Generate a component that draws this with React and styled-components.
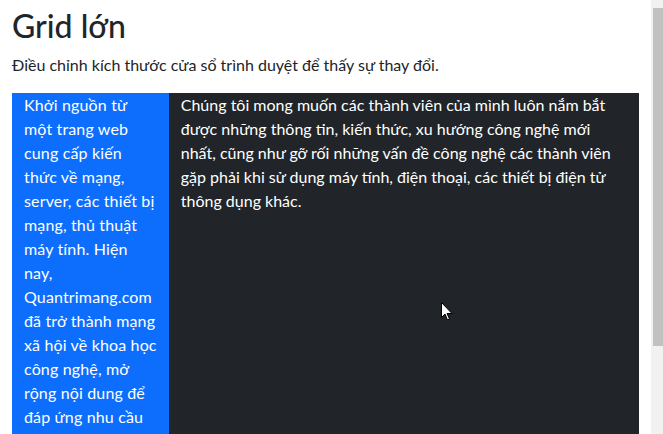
import React from 'react'
import styled, { createGlobalStyle } from 'styled-components'

const GlobalStyle = createGlobalStyle`
   html, body {
      margin: 0;
      height: 100%;
      overflow: hidden;
   }
   body {
      font-family: Lato, "Noto Sans", sans-serif;
      font-size: 16px;
      line-height: 1.5;
      color: #212529;
      background: #fff;
   }
   #root {
      height: 100%;
   }
`

const Window = styled.div`
   display: flex;
   height: 100%;
   position: relative;
`

const Page = styled.div`
   flex: 1;
   min-width: 0;
   padding: 7px 12px 0;
`

const Title = styled.h1`
   margin: 0 0 8px;
   font-size: 32px;
   font-weight: 500;
   line-height: 1.2;
`

const Lead = styled.p`
   margin: 0 0 16px;
`

const Row = styled.div`
   display: flex;
   align-items: stretch;
`

const Col = styled.div`
   flex: 0 0 ${p => p.$span / 12 * 100}%;
   box-sizing: border-box;
   padding: 0 12px;
   color: #fff;
   background: ${p => p.$bg};
   letter-spacing: ${p => p.$tracking || 0}px;
`

const Scrollbar = styled.div`
   flex: 0 0 12px;
   background: #f1f1f1;
   display: flex;
   flex-direction: column;
   align-items: flex-end;
`

const Thumb = styled.div`
   width: 10px;
   height: 338px;
   margin-top: 8px;
   background: #c1c1c1;
`

const Cursor = styled.svg`
   position: absolute;
   left: 441px;
   top: 302px;
   pointer-events: none;
`

function App() {
   return (
      <Window>
         <GlobalStyle />
         <Page>
            <Title>Grid lớn</Title>
            <Lead>Điều chỉnh kích thước cửa sổ trình duyệt để thấy sự thay đổi.</Lead>
            <Row>
               <Col $span={3} $bg="#0d6efd" $tracking={0.15}>
                  Khởi nguồn từ một trang web cung cấp kiến thức về mạng, server, các thiết bị mạng, thủ thuật máy tính. Hiện nay, Quantrimang.com đã trở thành mạng xã hội về khoa học công nghệ, mở rộng nội dung để đáp ứng nhu cầu của độc giả về những lĩnh vực khác.
               </Col>
               <Col $span={9} $bg="#212529">
                  Chúng tôi mong muốn các thành viên của mình luôn nắm bắt được những thông tin, kiến thức, xu hướng công nghệ mới nhất, cũng như gỡ rối những vấn đề công nghệ các thành viên gặp phải khi sử dụng máy tính, điện thoại, các thiết bị điện tử thông dụng khác.
               </Col>
            </Row>
         </Page>
         <Scrollbar>
            <Thumb />
         </Scrollbar>
         <Cursor width="12" height="19" viewBox="0 0 12 19">
            <path d="M0.5 0.5 L0.5 15.5 L4 12 L6.5 18 L8.5 17 L6 11.5 L11 11.5 Z" fill="#fff" stroke="#000" strokeWidth="1" />
         </Cursor>
      </Window>
   )
}

export default App
